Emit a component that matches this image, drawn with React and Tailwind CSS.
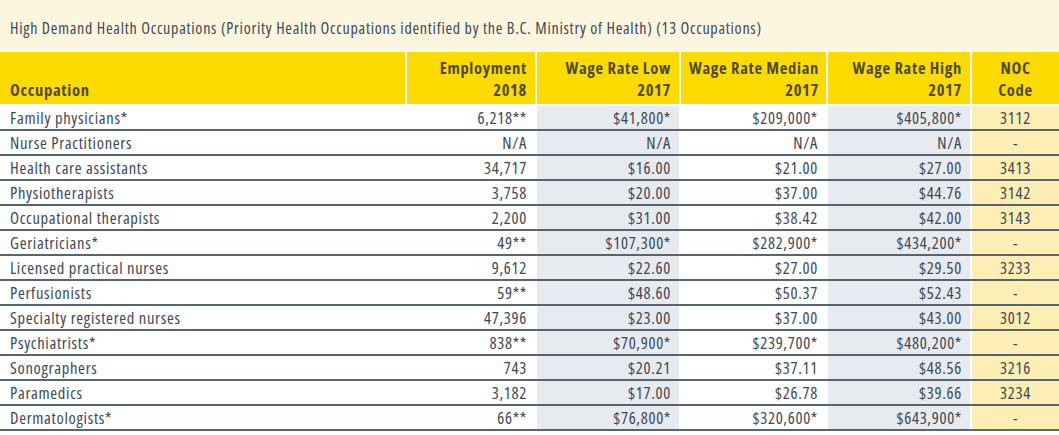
import React from "react";

const rows = [
  ["Family physicians*", "6,218**", "$41,800*", "$209,000*", "$405,800*", "3112"],
  ["Nurse Practitioners", "N/A", "N/A", "N/A", "N/A", "-"],
  ["Health care assistants", "34,717", "$16.00", "$21.00", "$27.00", "3413"],
  ["Physiotherapists", "3,758", "$20.00", "$37.00", "$44.76", "3142"],
  ["Occupational therapists", "2,200", "$31.00", "$38.42", "$42.00", "3143"],
  ["Geriatricians*", "49**", "$107,300*", "$282,900*", "$434,200*", "-"],
  ["Licensed practical nurses", "9,612", "$22.60", "$27.00", "$29.50", "3233"],
  ["Perfusionists", "59**", "$48.60", "$50.37", "$52.43", "-"],
  ["Specialty registered nurses", "47,396", "$23.00", "$37.00", "$43.00", "3012"],
  ["Psychiatrists*", "838**", "$70,900*", "$239,700*", "$480,200*", "-"],
  ["Sonographers", "743", "$20.21", "$37.11", "$48.56", "3216"],
  ["Paramedics", "3,182", "$17.00", "$26.78", "$39.66", "3234"],
  ["Dermatologists*", "66**", "$76,800*", "$320,600*", "$643,900*", "-"],
];

const font = { fontFamily: '"Open Sans", "DejaVu Sans Condensed", sans-serif' };

export default function App() {
  return (
    <div className="w-[1059px] h-[435px] bg-white overflow-hidden font-stretch-condensed" style={font}>
      <div className="h-[52px] bg-[#fdf6de] flex items-center pl-[10px] pt-[3px] text-[16px] tracking-[0.75px] text-[#3d4756] whitespace-nowrap">
        High Demand Health Occupations (Priority Health Occupations identified by the B.C. Ministry of Health) (13 Occupations)
      </div>
      <div className="flex h-[52px] gap-[2px] text-[16.5px] font-bold tracking-[0.7px] text-[#4d4a1f] leading-[22px]">
        <div className="w-[405px] bg-[#fedb00] flex items-end pl-[10px] pb-[3px]">Occupation</div>
        <div className="w-[128px] bg-[#fedb00] flex flex-col justify-end items-end pr-[8px] pb-[3px] text-right">
          <span>Employment</span><span>2018</span>
        </div>
        <div className="w-[142px] bg-[#fedb00] flex flex-col justify-end items-end pr-[8px] pb-[3px] text-right">
          <span>Wage Rate Low</span><span>2017</span>
        </div>
        <div className="w-[145px] bg-[#fedb00] flex flex-col justify-end items-end pr-[7px] pb-[3px] text-right whitespace-nowrap">
          <span>Wage Rate Median</span><span>2017</span>
        </div>
        <div className="w-[142px] bg-[#fedb00] flex flex-col justify-end items-end pr-[8px] pb-[3px] text-right">
          <span>Wage Rate High</span><span>2017</span>
        </div>
        <div className="flex-1 bg-[#fedb00] flex flex-col justify-end items-center pb-[3px]">
          <span>NOC</span><span>Code</span>
        </div>
      </div>
      <div className="pt-[2px] text-[16.5px] tracking-[0.7px] text-[#3d4756]">
        {rows.map((r, i) => (
          <div key={i} className="flex h-[25px] gap-[2px] border-b-2 border-[#5a6370] leading-[23px]">
            <div className="w-[405px] pl-[10px]">{r[0]}</div>
            <div className="w-[128px] text-right pr-[8px]">{r[1]}</div>
            <div className="w-[142px] text-right pr-[8px] bg-[#e7eaee]">{r[2]}</div>
            <div className="w-[145px] text-right pr-[8px]">{r[3]}</div>
            <div className="w-[142px] text-right pr-[8px] bg-[#e7eaee]">{r[4]}</div>
            <div className="flex-1 text-center bg-[#fdeeb3]">{r[5]}</div>
          </div>
        ))}
      </div>
    </div>
  );
}
